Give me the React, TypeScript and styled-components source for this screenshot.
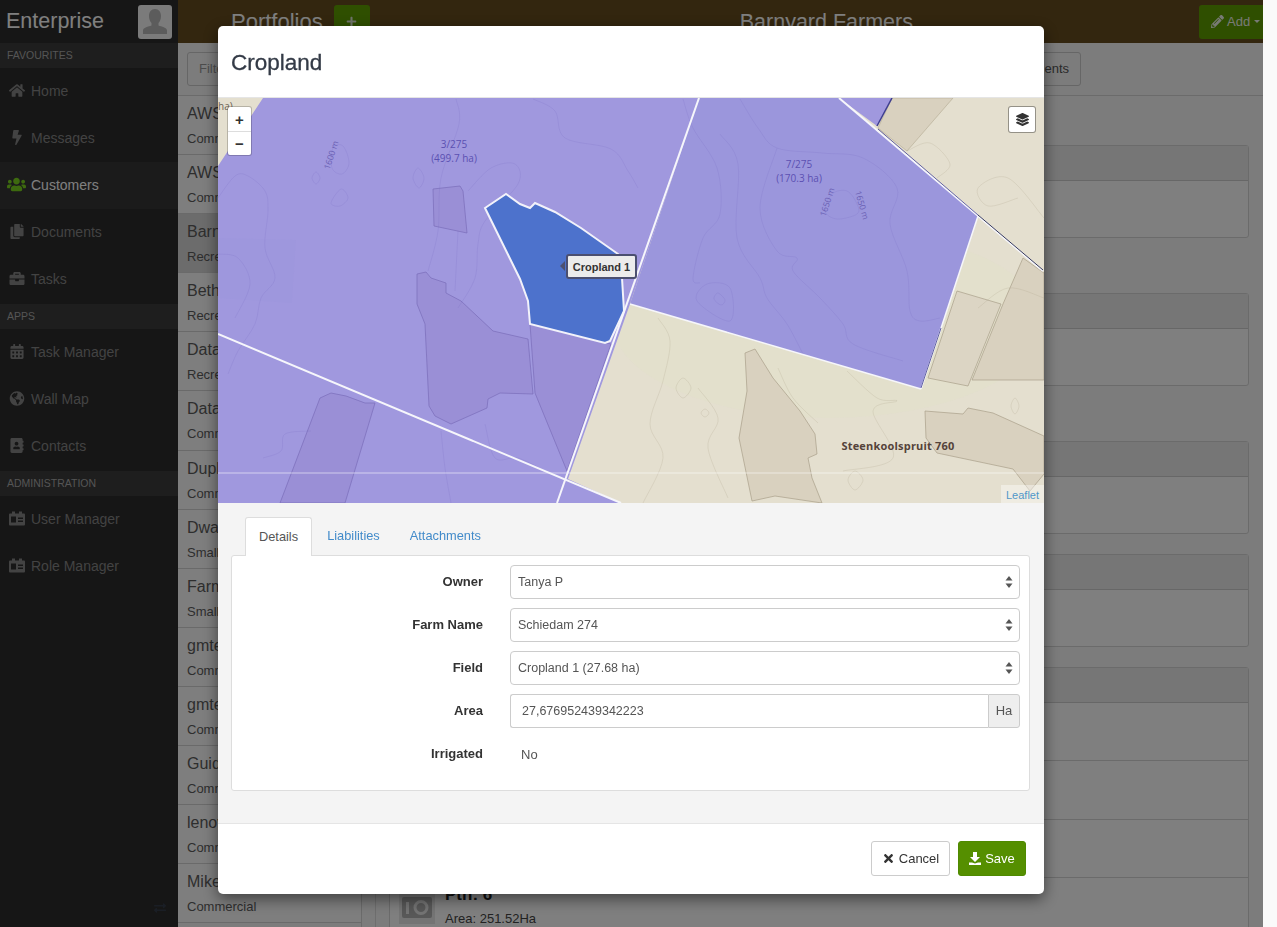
import React from 'react';
import styled, {createGlobalStyle} from 'styled-components';
import {
    FaAddressBook, FaBolt, FaBriefcase, FaCalendarAlt, FaCopy, FaExchangeAlt, FaGlobeAmericas,
    FaHome, FaLayerGroup, FaPencilAlt, FaPlus, FaTimes, FaUsers,
} from 'react-icons/fa';

const GlobalStyle = createGlobalStyle`
  html, body {
    margin: 0;
    height: 100%;
    overflow: hidden;
    background: #fafafa;
    font-family: "Liberation Sans", Arial, sans-serif;
    font-size: 13px;
  }
  * { box-sizing: border-box; }
`;

/* page behind the backdrop */
const Page = styled.div`
  display: flex;
  width: 1263px;
  height: 927px;
  overflow: hidden;
  background: #f8f8f8;
`;
const Sidebar = styled.aside`
  display: flex;
  flex-direction: column;
  flex: 0 0 178px;
  background: #2c2c2c;
`;
const Brand = styled.div`
  display: flex;
  align-items: center;
  justify-content: space-between;
  height: 43px;
  padding: 0 6px;
  color: #fff;
  font-size: 21.5px;
`;
const Avatar = styled.div`
  width: 34px;
  height: 34px;
  border-radius: 3px;
  background: #f6f6f6;
  color: #b8b8b8;
  overflow: hidden;
`;
const SectionTitle = styled.div`
  height: 25px;
  padding-left: 7px;
  line-height: 25px;
  background: #3c3c3c;
  color: #aaa;
  font-size: 10.5px;
  text-transform: uppercase;
`;
const NavItem = styled.div<{$active?: boolean}>`
  display: flex;
  align-items: center;
  height: 47px;
  padding: 0 0 2px ${p => p.$active ? 7 : 9}px;
  background: ${p => p.$active ? '#363636' : 'transparent'};
  color: ${p => p.$active ? '#fff' : '#868686'};
  font-size: 14px;
  svg {
    flex: 0 0 ${p => p.$active ? 19 : 16}px;
    width: ${p => p.$active ? 19 : 16}px;
    height: ${p => p.$active ? 19 : 15}px;
    margin-right: ${p => p.$active ? 5 : 6}px;
    color: ${p => p.$active ? '#7bd41e' : '#868686'};
  }
`;
const NavList = styled.div`
  margin-bottom: 1px;
`;
const SidebarFoot = styled.div`
  display: flex;
  justify-content: flex-end;
  margin-top: auto;
  padding: 0 12px 13px 0;
  color: #343d4b;
  font-size: 12px;
`;
const Main = styled.main`
  display: flex;
  flex-direction: column;
  flex: 1;
  min-width: 0;
`;
const Header = styled.header`
  display: flex;
  align-items: center;
  flex: 0 0 43px;
  background: #664c1e;
  color: #fff;
  font-size: 22px;
`;
const HeaderTitle = styled.div`
  margin: 0 11px 0 53px;
  padding-top: 1px;
`;
const HeaderCenter = styled.div`
  flex: 1;
  padding: 1px 0 0 84px;
  font-size: 21.5px;
  text-align: center;
`;
const GreenButton = styled.button`
  display: flex;
  align-items: center;
  justify-content: center;
  height: 34px;
  padding: 0;
  border: 0;
  border-radius: 3px;
  background: #5e9e00;
  color: #fff;
  font: inherit;
`;
const HeaderPlus = styled(GreenButton)`
  width: 36px;
  color: #dfe8d4;
  font-size: 11px;
`;
const AddButton = styled(GreenButton)`
  justify-content: flex-start;
  gap: 3px;
  width: 64px;
  padding-left: 12px;
  color: #f0f4ea;
  font-size: 13px;
  border-radius: 3px 0 0 3px;
  svg { flex: 0 0 13px; }
  &::after {
    content: "";
    margin-left: 1px;
    border: 3.500px solid transparent;
    border-top-color: #f0f4ea;
    border-bottom: 0;
  }
`;
const Toolbar = styled.div`
  display: flex;
  align-items: center;
  justify-content: space-between;
  flex: 0 0 53px;
  padding: 0 182px 1px 9px;
  border-bottom: 1px solid #d6d6d6;
`;
const FilterInput = styled.input`
  width: 170px;
  height: 34px;
  padding: 0 11px;
  border: 1px solid #ccc;
  border-radius: 3px;
  background: #f8f8f8;
  font: inherit;
  &::placeholder { color: #999; }
`;
const ToolButton = styled.button`
  height: 34px;
  padding: 0 11px;
  border: 1px solid #ccc;
  border-radius: 3px;
  background: #f8f8f8;
  color: #555;
  font: inherit;
`;
const Content = styled.div`
  display: flex;
  flex: 1;
  min-height: 0;
`;
const CustomerList = styled.div`
  flex: 0 0 184px;
  border-right: 1px solid #d6d6d6;
`;
const CustomerRow = styled.div<{$selected?: boolean}>`
  height: 59.1px;
  padding: 8px 9px 0;
  border-bottom: 1px solid #d4d4d4;
  background: ${p => p.$selected ? '#d8d8d8' : '#fdfdfd'};
  color: #5c5c5c;
  white-space: nowrap;
  overflow: hidden;
`;
const CustomerName = styled.div`
  font-size: 16px;
  line-height: 20px;
`;
const CustomerType = styled.div`
  margin-top: 6px;
  font-size: 13px;
  line-height: 18px;
`;
const Detail = styled.div`
  flex: 1;
  margin-left: 13px;
  padding: 0 14px 0 13px;
  border-left: 1px solid #dcdcdc;
`;
const Panel = styled.section<{$top: number}>`
  margin-top: ${p => p.$top}px;
  border: 1px solid #d6d6d6;
  border-radius: 3px;
  background: #fff;
`;
const PanelHead = styled.div`
  height: 35px;
  border-bottom: 1px solid #cfcfcf;
  background: #ececec;
`;
const PanelBody = styled.div`
  height: 56px;
`;
const PortionRow = styled.div`
  display: flex;
  height: 58.3px;
  padding: 10px 9px 0;
  border-bottom: 1px solid #d6d6d6;
  color: #444;
`;
const Thumb = styled.div`
  display: flex;
  align-items: center;
  justify-content: center;
  flex: 0 0 36px;
  height: 36px;
  margin-right: 10px;
  background: #e8e8e8;
  color: #b0b0b0;
`;
const PortionName = styled.div`
  margin-top: -2px;
  color: #222;
  font-size: 17px;
  font-weight: bold;
  line-height: 17px;
`;
const PortionArea = styled.div`
  margin-top: 7px;
  font-size: 13px;
  line-height: 18px;
`;

/* modal */
const Backdrop = styled.div`
  position: fixed;
  top: 0;
  left: 0;
  bottom: 0;
  width: 1263px;
  background: rgba(0, 0, 0, 0.5);
  overflow: hidden;
`;
const Modal = styled.div`
  display: flex;
  flex-direction: column;
  width: 826px;
  height: 868px;
  margin: 26px 0 0 218px;
  border-radius: 5px;
  background: #fff;
  box-shadow: 0 5px 15px rgba(0, 0, 0, 0.5);
  overflow: hidden;
`;
const ModalHeader = styled.div`
  flex: 0 0 72px;
  padding: 23px 13px 0;
  border-bottom: 1px solid #e5e5e5;
  color: #333a46;
  font-size: 22.5px;
  line-height: 28px;
  -webkit-text-stroke: 0.3px #333a46;
`;
const MapWrap = styled.div`
  position: relative;
  flex: 0 0 405px;
  background: #e4dfcf;
  overflow: hidden;
`;
const MapSvg = styled.svg`
  display: block;
`;
const ZoomControl = styled.div`
  position: absolute;
  top: 9px;
  left: 10px;
  display: flex;
  flex-direction: column;
  width: 23px;
  border-radius: 2px;
  background: #fff;
  box-shadow: 0 0 0 1px rgba(0, 0, 0, 0.2);
`;
const ZoomButton = styled.div`
  display: flex;
  align-items: center;
  justify-content: center;
  height: 24px;
  color: #333;
  font-size: 15px;
  font-weight: bold;
  & + & { border-top: 1px solid #ddd; }
`;
const LayersControl = styled.div`
  position: absolute;
  top: 9px;
  right: 9px;
  display: flex;
  align-items: center;
  justify-content: center;
  width: 26px;
  height: 25px;
  border-radius: 2px;
  background: #fff;
  box-shadow: 0 0 0 1px rgba(0, 0, 0, 0.35);
  color: #333;
  font-size: 13px;
`;
const Attribution = styled.div`
  position: absolute;
  right: 0;
  bottom: 0;
  height: 18px;
  padding: 4px 5px 0;
  background: rgba(255, 255, 255, 0.4);
  color: #4f97c9;
  font-size: 11px;
`;
const FieldTooltip = styled.div`
  position: absolute;
  top: 156px;
  left: 348px;
  width: 71px;
  height: 25px;
  border: 2px solid #4b4f70;
  border-radius: 3px;
  background: #ececec;
  color: #333;
  font-size: 11px;
  font-weight: bold;
  line-height: 22px;
  text-align: center;
  &::before {
    content: "";
    position: absolute;
    top: 5px;
    left: -8px;
    border: 5px solid transparent;
    border-left: 0;
    border-right: 5px solid #4b4f70;
  }
`;
const ModalBody = styled.div`
  flex: 1;
  padding: 14px 14px 32px 13px;
  background: #f4f4f4;
`;
const Tabs = styled.div`
  display: flex;
  height: 38px;
  padding-left: 14px;
  font-size: 12.8px;
`;
const Tab = styled.div<{$active?: boolean}>`
  height: ${p => p.$active ? '39px' : '38px'};
  padding: 0 ${p => p.$active ? 13 : 15}px;
  border: 1px solid ${p => p.$active ? '#ddd' : 'transparent'};
  border-width: ${p => p.$active ? '1px 1px 0' : '0'};
  border-radius: 3px 3px 0 0;
  background: ${p => p.$active ? '#fff' : 'transparent'};
  color: ${p => p.$active ? '#555' : '#428bca'};
  line-height: 38px;
  position: relative;
  z-index: 1;
`;
const TabPanel = styled.div`
  display: flex;
  flex-direction: column;
  gap: 9px;
  height: 236px;
  padding: 9px 9px 0 0;
  border: 1px solid #ddd;
  border-radius: 3px;
  background: #fff;
`;
const FormRow = styled.div`
  display: grid;
  grid-template-columns: 251px 1fr;
  column-gap: 27px;
  align-items: center;
  height: 34px;
`;
const FieldLabel = styled.label`
  margin-bottom: 2px;
  color: #333;
  font-weight: bold;
  text-align: right;
`;
const SelectWrap = styled.div`
  position: relative;
  svg {
    position: absolute;
    top: 10px;
    right: 7px;
  }
`;
const Select = styled.select`
  display: block;
  width: 100%;
  height: 34px;
  padding: 0 7px 1px;
  border: 1px solid #ccc;
  border-radius: 4px;
  background: #fff;
  color: #555;
  font: inherit;
  font-size: 12.5px;
  appearance: none;
`;
const InputGroup = styled.div`
  display: flex;
`;
const TextInput = styled.input`
  flex: 1;
  min-width: 0;
  height: 34px;
  padding: 0 11px 1px;
  border: 1px solid #ccc;
  border-right: 0;
  border-radius: 3px 0 0 3px;
  color: #555;
  font: inherit;
  font-size: 12.5px;
`;
const Addon = styled.span`
  flex: 0 0 32px;
  border: 1px solid #ccc;
  border-radius: 0 3px 3px 0;
  background: #eee;
  color: #555;
  line-height: 31px;
  text-align: center;
`;
const StaticValue = styled.div`
  padding: 0 0 0 11px;
  color: #555;
`;
const ModalFooter = styled.div`
  display: flex;
  justify-content: flex-end;
  gap: 8px;
  flex: 0 0 71px;
  padding: 17px 18px 0 0;
  border-top: 1px solid #e5e5e5;
`;
const FooterButton = styled.button<{$primary?: boolean}>`
  display: flex;
  align-items: center;
  justify-content: center;
  gap: 4px;
  width: ${p => p.$primary ? 68 : 79}px;
  height: 35px;
  border: 1px solid ${p => p.$primary ? '#4f8a00' : '#ccc'};
  border-radius: 3px;
  background: ${p => p.$primary ? '#558f00' : '#fff'};
  color: ${p => p.$primary ? '#fff' : '#333'};
  font: inherit;
`;

const smooth = (pts: number[][], closed = false) => {
    const n = pts.length;
    const at = (i: number) => closed ? pts[(i + n) % n] : pts[Math.max(0, Math.min(n - 1, i))];
    let d = `M${pts[0][0]} ${pts[0][1]}`;
    const end = closed ? n : n - 1;
    for (let i = 0; i < end; i++) {
        const [p0, p1, p2, p3] = [at(i - 1), at(i), at(i + 1), at(i + 2)];
        d += `C${(p1[0] + (p2[0] - p0[0]) / 6).toFixed(1)} ${(p1[1] + (p2[1] - p0[1]) / 6).toFixed(1)} ${(p2[0] - (p3[0] - p1[0]) / 6).toFixed(1)} ${(p2[1] - (p3[1] - p1[1]) / 6).toFixed(1)} ${p2[0]} ${p2[1]}`;
    }
    return closed ? d + 'Z' : d;
};

const purpleContours = [
    [[0, 100], [17, 78], [30, 78], [47, 93], [50, 113], [47, 150], [57, 180], [43, 200], [37, 226], [20, 253], [10, 276]],
    [[238, 1], [241, 26], [223, 80], [220, 133], [210, 173]],
    [[240, 133], [237, 193]],
    [[250, 93], [273, 70], [297, 66], [300, 86], [267, 123], [260, 146], [257, 180], [240, 210]],
    [[315, 1], [337, 13], [347, 40], [393, 51], [410, 73], [420, 90]],
    [[0, 156], [20, 160], [32, 186], [17, 220]],
    [[45, 360], [63, 353], [67, 336], [93, 333]],
    [[267, 326], [277, 360], [300, 360], [327, 373]],
    [[223, 333], [227, 370], [233, 405]],
    [[522, 1], [540, 30], [559, 50], [604, 55], [645, 60], [679, 90], [672, 126], [689, 173], [692, 213], [702, 223], [722, 220]],
    [[465, 1], [475, 30], [499, 70], [502, 116], [485, 140], [475, 180], [482, 185]],
    [[502, 36], [520, 66], [519, 140], [542, 180], [549, 200], [569, 226], [585, 256]],
    [[559, 50], [542, 110], [559, 153], [579, 160], [575, 173], [602, 200], [625, 226], [635, 246], [685, 263]],
];
const purpleLoops = [
    [[115, 50], [125, 48], [131, 65], [124, 76], [114, 70]],
    [[98, 74], [102, 80], [98, 86], [94, 80]],
    [[123, 91], [130, 100], [122, 108], [113, 105]],
    [[200, 70], [206, 80], [201, 90], [195, 80]],
    [[489, 186], [512, 190], [512, 223], [479, 203]],
    [[500, 195], [507, 202], [503, 207], [496, 201]],
    [[614, 96], [629, 93], [639, 106], [639, 116], [619, 121], [607, 113]],
];
const beigeContours = [
    [[440, 220], [452, 243], [445, 283], [432, 326], [445, 360], [425, 405]],
    [[629, 273], [659, 300], [679, 303], [655, 313], [675, 360], [625, 373]],
    [[689, 53], [712, 45], [732, 66], [719, 80]],
    [[826, 120], [790, 80], [760, 90], [770, 108], [800, 100]],
    [[480, 290], [500, 320], [490, 350], [510, 400]],
    [[760, 210], [790, 190], [826, 200]],
    [[560, 270], [575, 300], [600, 325]],
];
const beigeLoops = [
    [[465, 280], [473, 290], [465, 300], [458, 290]],
    [[487, 311], [491, 315], [487, 319], [483, 315]],
    [[797, 300], [801, 308], [797, 316], [793, 308]],
    [[637, 373], [645, 382], [637, 392], [630, 382]],
];

const MapDrawing = () => (
    <MapSvg width={826} height={405} viewBox="0 0 826 405">
        <rect width={826} height={405} fill="#e4dfcf"/>
        <ellipse cx={610} cy={225} rx={215} ry={95} fill="#e1e0cb" fillOpacity={0.55}/>
        <polygon points="660,30 674,0 735,0 689,53" fill="#d9d1bf" stroke="#b9b09a" strokeWidth={0.7}/>
        <polygon points="527,255 537,251 555,280 582,313 597,336 599,356 590,360 594,380 604,405 557,398 534,403 521,340 529,293" fill="#d9d1bf" stroke="#a99f8a" strokeWidth={0.7}/>
        <polygon points="805,160 826,175 826,282 754,282 785,206" fill="#d9d1bf" stroke="#a99f8a" strokeWidth={0.7}/>
        <polygon points="739,193 783,206 750,288 710,280" fill="#dcd5c4" stroke="#a99f8a" strokeWidth={0.7}/>
        <polygon points="707,313 745,316 750,310 775,315 826,338 826,376 812,393 795,371 719,355 708,340" fill="#d9d1bf" stroke="#a99f8a" strokeWidth={0.7}/>
        <g fill="none" stroke="#a59c84" strokeOpacity={0.25} strokeWidth={0.8}>
            {beigeContours.map((pts, i) => <path key={i} d={smooth(pts)}/>)}
            {beigeLoops.map((pts, i) => <path key={i} d={smooth(pts, true)}/>)}
        </g>
        <polygon points="45,0 481,0 412,206 350,381 403,405 0,405 0,68" fill="#a098de"/>
        <polygon points="0,140 78,142 74,205 0,200" fill="#9e97dd"/>
        <polygon points="481,0 621,0 760,118 703,291 412,206" fill="#9b96dc"/>
        <polygon points="621,0 674,0 659,28" fill="#a098de"/>
        <polyline points="659,28 674,0" fill="none" stroke="#3f3f8f" strokeWidth={1.5}/>
        <polygon points="215,91 242,88 245,93 249,135 216,128" fill="#9a8fd6" stroke="#7a6db9" strokeWidth={0.7}/>
        <polygon points="199,176 208,174 213,180 228,185 228,195 243,203 275,233 310,241 315,296 282,295 270,301 269,310 233,326 217,318 211,308 207,226 199,206" fill="#9a8fd6" stroke="#7a6db9" strokeWidth={0.7}/>
        <polygon points="312,226 393,246 349,373 317,295" fill="#9a8fd6" stroke="#7a6db9" strokeWidth={0.7}/>
        <polygon points="102,300 113,295 128,298 147,305 157,305 127,405 62,405" fill="#9a8fd6" stroke="#7a6db9" strokeWidth={0.7}/>
        <g fill="none" stroke="#6a5fb5" strokeOpacity={0.18} strokeWidth={0.8}>
            {purpleContours.map((pts, i) => <path key={i} d={smooth(pts)}/>)}
            {purpleLoops.map((pts, i) => <path key={i} d={smooth(pts, true)}/>)}
        </g>
        <polygon points="267,110 288,96 302,106 312,110 317,105 337,114 363,130 400,156 404,180 406,213 392,243 387,245 312,226 310,203 302,181" fill="#4d72cc" stroke="#f2f2fa" strokeWidth={2}/>
        <line x1={0} y1={375} x2={826} y2={375} stroke="#fff" strokeOpacity={0.55}/>
        <g stroke="#f6f6fb" fill="none">
            <line x1={481} y1={0} x2={339} y2={405} strokeWidth={2}/>
            <line x1={0} y1={236} x2={403} y2={405} strokeWidth={2}/>
            <line x1={412} y1={206} x2={703} y2={291} strokeWidth={1.5}/>
            <line x1={703} y1={291} x2={760} y2={118} strokeWidth={1.5}/>
            <line x1={621} y1={0} x2={825} y2={173} strokeWidth={2}/>
        </g>
        <line x1={760} y1={117} x2={825} y2={172} stroke="#34385a" strokeWidth={1}/>
        <line x1={660} y1={31} x2={760} y2={117} stroke="#3f3f8f" strokeWidth={0.8}/>
        <line x1={703} y1={290} x2={723} y2={230} stroke="#3f3f8f" strokeWidth={0.8}/>
        <g fontFamily='"Open Sans", sans-serif' fontSize={10} fill="#5b50b2" textAnchor="middle">
            <text x={236} y={50}>3/275</text>
            <text x={236} y={64}>(499.7 ha)</text>
            <text x={581} y={70}>7/275</text>
            <text x={581} y={84}>(170.3 ha)</text>
        </g>
        <g fontFamily='"Open Sans", sans-serif' fontSize={8.5} fill="#6a60b4" textAnchor="middle">
            <text transform="translate(116 58) rotate(-72)">1600 m</text>
            <text transform="translate(612 105) rotate(-72)">1650 m</text>
            <text transform="translate(641 108) rotate(74)">1650 m</text>
        </g>
        <text x={680} y={352} fontFamily='"Open Sans", sans-serif' fontSize={11} fontWeight={700} letterSpacing={0.2} fill="#54433a" textAnchor="middle">Steenkoolspruit 760</text>
        <text x={0} y={12} fontFamily='"Open Sans", sans-serif' fontSize={10} fill="#6b6355">ha)</text>
    </MapSvg>
);

const SelectArrows = () => (
    <svg width="8" height="14" viewBox="0 0 8 14" fill="#555">
        <path d="M4 1 7.500 5.500H.5z"/>
        <path d="M4 13 7.500 8.500H.5z"/>
    </svg>
);

const BustIcon = () => (
    <svg width="34" height="34" viewBox="0 0 34 34" fill="currentColor">
        <path d="M17 4c3.800 0 6 3 6 7 0 3-1 5.500-2.500 7v2.500c3 1.200 8.500 2 8.500 5V29H5v-3.500c0-3 5.500-3.800 8.500-5V18C12 16.500 11 14 11 11c0-4 2.200-7 6-7z"/>
    </svg>
);

const BadgeIcon = () => (
    <svg width="16" height="14" viewBox="0 0 16 14" fill="currentColor">
        <path d="M3 0h3v2h4V0h3v2h2a1 1 0 0 1 1 1v10a1 1 0 0 1-1 1H1a1 1 0 0 1-1-1V3a1 1 0 0 1 1-1h2zM2 5v6h5V5zm7 1v1.500h5V6zm0 3v1.500h5V9z"/>
    </svg>
);

const CameraIcon = () => (
    <svg width="30" height="24" viewBox="0 0 30 24" fill="currentColor">
        <path fillRule="evenodd" d="M2 3h26a2 2 0 0 1 2 2v17a2 2 0 0 1-2 2H2a2 2 0 0 1-2-2V5a2 2 0 0 1 2-2zm17 3a7.500 7.500 0 1 0 0 15 7.500 7.500 0 0 0 0-15zm0 3a4.500 4.500 0 1 1 0 9 4.500 4.500 0 0 1 0-9zM4 8v12h3V8z"/>
    </svg>
);

const SaveIcon = () => (
    <svg width="12" height="13" viewBox="0 0 12 13" fill="currentColor">
        <path d="M4 0h4v5h3L6 10 1 5h3zM0 10.500h3l3 1 3-1h3V13H0z"/>
    </svg>
);

const customers = [
    ['AWS', 'Commercial'], ['AWS', 'Commercial'], ['Barnyard Farmers', 'Recreational'], ['Bethel', 'Recreational'],
    ['Data', 'Recreational'], ['Data', 'Commercial'], ['Duplicate', 'Commercial'], ['Dwarsrivier', 'Smallholder'],
    ['Farm', 'Smallholder'], ['gmtest', 'Commercial'], ['gmtest', 'Commercial'], ['Guide', 'Commercial'],
    ['lenovo', 'Commercial'], ['Mike', 'Commercial'],
];

const App = () => (
    <>
        <GlobalStyle/>
        <Page>
            <Sidebar>
                <Brand>Enterprise<Avatar><BustIcon/></Avatar></Brand>
                <SectionTitle>Favourites</SectionTitle>
                <NavList>
                    <NavItem><FaHome/>Home</NavItem>
                    <NavItem><FaBolt/>Messages</NavItem>
                    <NavItem $active><FaUsers/>Customers</NavItem>
                    <NavItem><FaCopy/>Documents</NavItem>
                    <NavItem><FaBriefcase/>Tasks</NavItem>
                </NavList>
                <SectionTitle>Apps</SectionTitle>
                <NavList>
                    <NavItem><FaCalendarAlt/>Task Manager</NavItem>
                    <NavItem><FaGlobeAmericas/>Wall Map</NavItem>
                    <NavItem><FaAddressBook/>Contacts</NavItem>
                </NavList>
                <SectionTitle>Administration</SectionTitle>
                <NavList>
                    <NavItem><BadgeIcon/>User Manager</NavItem>
                    <NavItem><BadgeIcon/>Role Manager</NavItem>
                </NavList>
                <SidebarFoot><FaExchangeAlt/></SidebarFoot>
            </Sidebar>
            <Main>
                <Header>
                    <HeaderTitle>Portfolios</HeaderTitle>
                    <HeaderPlus><FaPlus/></HeaderPlus>
                    <HeaderCenter>Barnyard Farmers</HeaderCenter>
                    <AddButton><FaPencilAlt size={13}/>Add</AddButton>
                </Header>
                <Toolbar>
                    <FilterInput placeholder="Filter..."/>
                    <ToolButton>Documents</ToolButton>
                </Toolbar>
                <Content>
                    <CustomerList>
                        {customers.map(([name, type], i) => (
                            <CustomerRow key={i} $selected={i === 2}>
                                <CustomerName>{name}</CustomerName>
                                <CustomerType>{type}</CustomerType>
                            </CustomerRow>
                        ))}
                    </CustomerList>
                    <Detail>
                        <Panel $top={49}><PanelHead/><PanelBody/></Panel>
                        <Panel $top={55}><PanelHead/><PanelBody/></Panel>
                        <Panel $top={55}><PanelHead/><PanelBody/></Panel>
                        <Panel $top={20}><PanelHead/><PanelBody/></Panel>
                        <Panel $top={20}>
                            <PanelHead/>
                            <PortionRow/>
                            <PortionRow/>
                            <PortionRow/>
                            <PortionRow>
                                <Thumb><CameraIcon/></Thumb>
                                <div>
                                    <PortionName>Ptn: 6</PortionName>
                                    <PortionArea>Area: 251.52Ha</PortionArea>
                                </div>
                            </PortionRow>
                        </Panel>
                    </Detail>
                </Content>
            </Main>
        </Page>
        <Backdrop>
            <Modal>
                <ModalHeader>Cropland</ModalHeader>
                <MapWrap>
                    <MapDrawing/>
                    <ZoomControl>
                        <ZoomButton>+</ZoomButton>
                        <ZoomButton>−</ZoomButton>
                    </ZoomControl>
                    <LayersControl><FaLayerGroup/></LayersControl>
                    <FieldTooltip>Cropland 1</FieldTooltip>
                    <Attribution>Leaflet</Attribution>
                </MapWrap>
                <ModalBody>
                    <Tabs>
                        <Tab $active>Details</Tab>
                        <Tab>Liabilities</Tab>
                        <Tab>Attachments</Tab>
                    </Tabs>
                    <TabPanel>
                        <FormRow>
                            <FieldLabel>Owner</FieldLabel>
                            <SelectWrap>
                                <Select defaultValue="Tanya P"><option>Tanya P</option></Select>
                                <SelectArrows/>
                            </SelectWrap>
                        </FormRow>
                        <FormRow>
                            <FieldLabel>Farm Name</FieldLabel>
                            <SelectWrap>
                                <Select defaultValue="Schiedam 274"><option>Schiedam 274</option></Select>
                                <SelectArrows/>
                            </SelectWrap>
                        </FormRow>
                        <FormRow>
                            <FieldLabel>Field</FieldLabel>
                            <SelectWrap>
                                <Select defaultValue="Cropland 1 (27.68 ha)"><option>Cropland 1 (27.68 ha)</option></Select>
                                <SelectArrows/>
                            </SelectWrap>
                        </FormRow>
                        <FormRow>
                            <FieldLabel>Area</FieldLabel>
                            <InputGroup>
                                <TextInput readOnly value="27,676952439342223"/>
                                <Addon>Ha</Addon>
                            </InputGroup>
                        </FormRow>
                        <FormRow>
                            <FieldLabel>Irrigated</FieldLabel>
                            <StaticValue>No</StaticValue>
                        </FormRow>
                    </TabPanel>
                </ModalBody>
                <ModalFooter>
                    <FooterButton><FaTimes size={13}/>Cancel</FooterButton>
                    <FooterButton $primary><SaveIcon/>Save</FooterButton>
                </ModalFooter>
            </Modal>
        </Backdrop>
    </>
);

export default App;
